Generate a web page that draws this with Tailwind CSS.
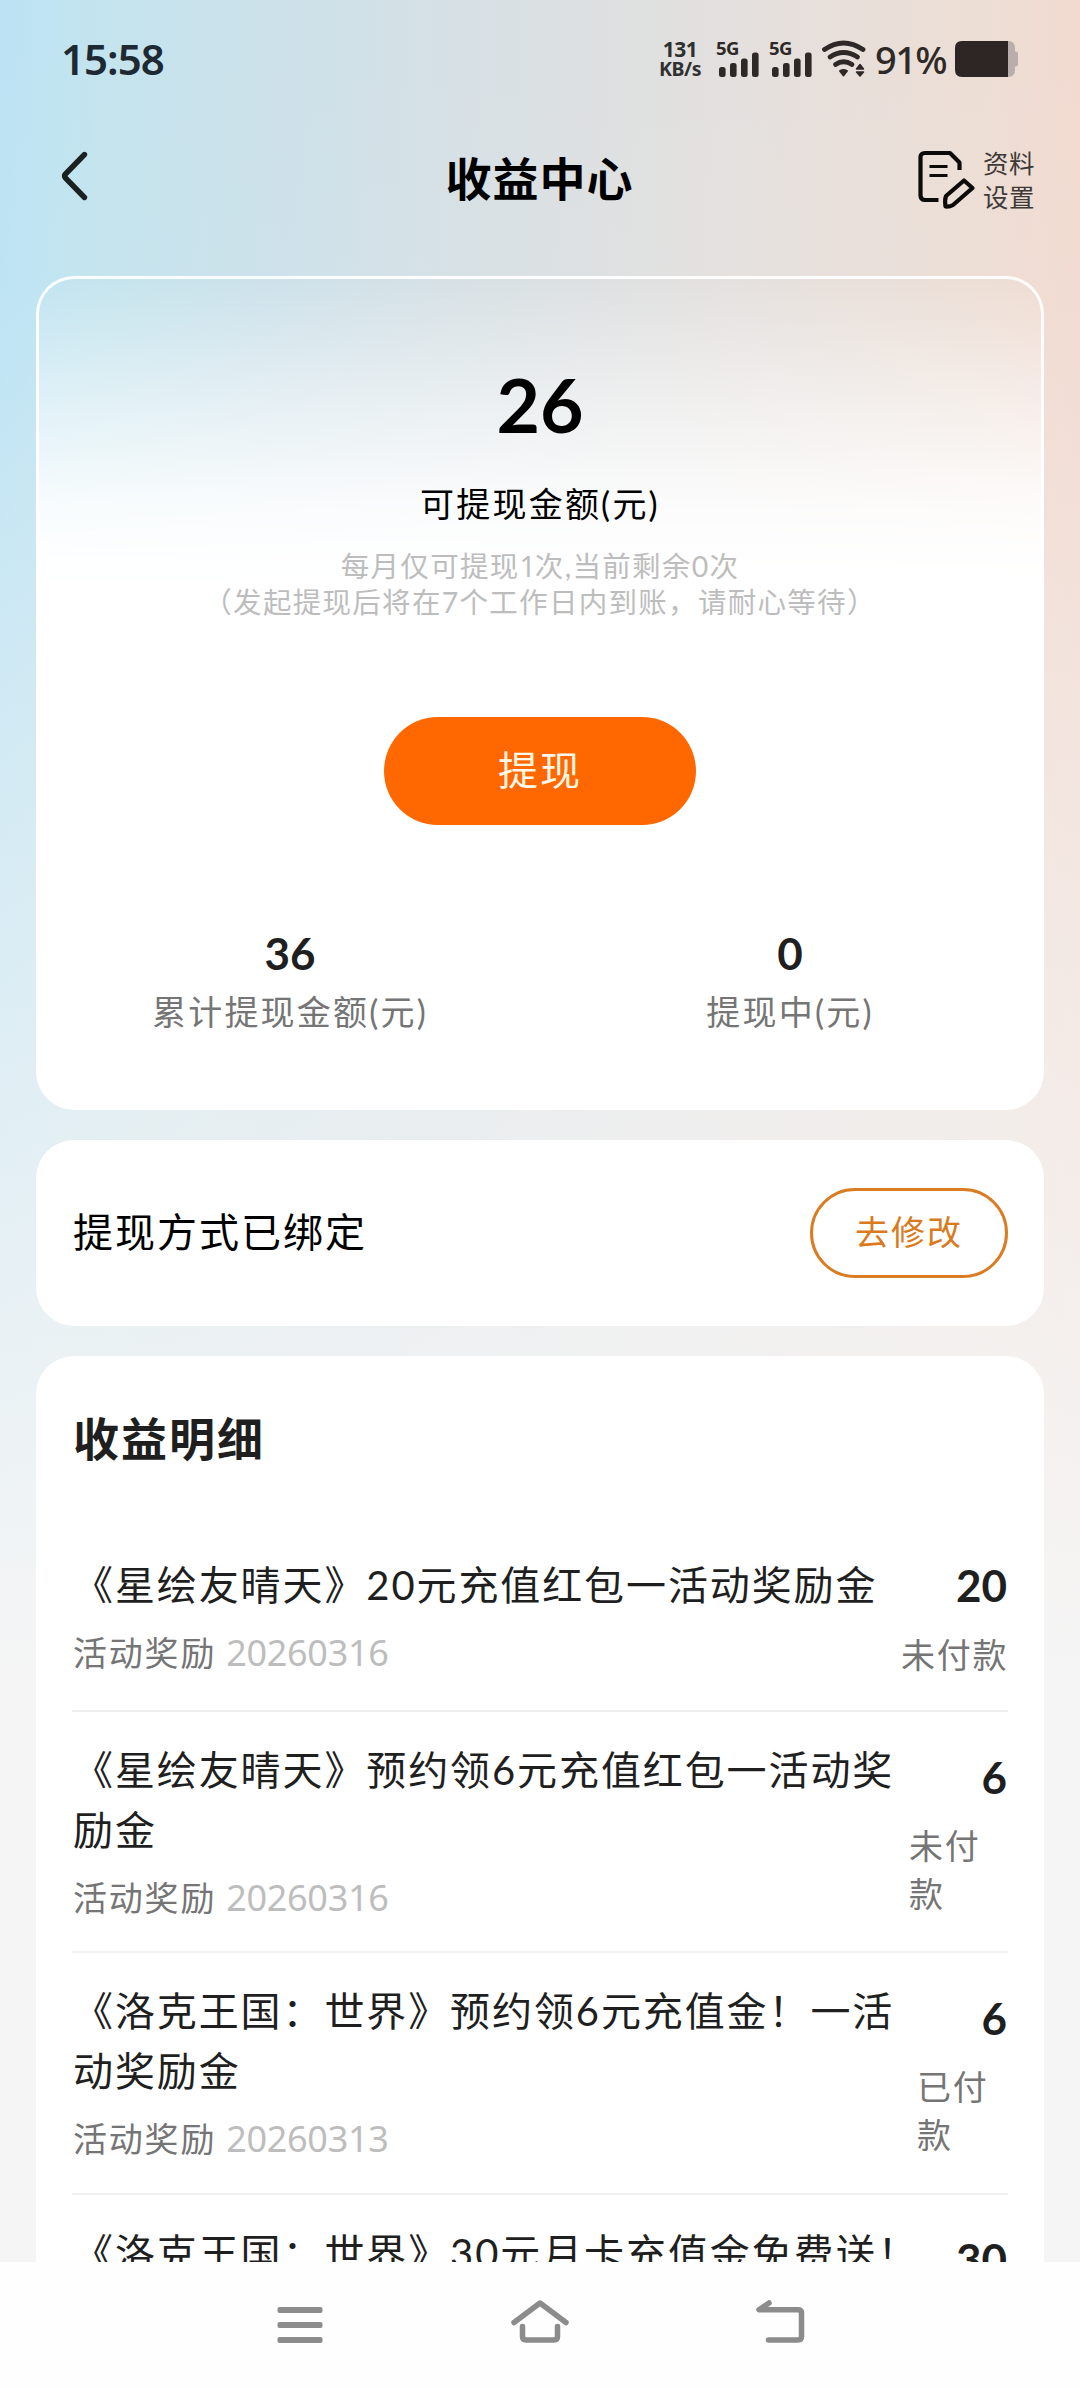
<!DOCTYPE html>
<html lang="zh-CN">
<head>
<meta charset="utf-8">
<title>收益中心</title>
<script src="https://cdn.jsdelivr.net/npm/@tailwindcss/browser@4"></script>
</head>
<body class="bg-[#f5f5f5]">
<div class="w-[1080px] h-[2388px] overflow-hidden flex flex-col font-['Lato','Noto_Sans_CJK_SC',sans-serif] text-[#1f1f1f] bg-[linear-gradient(180deg,rgba(245,245,245,0)_0px,rgba(245,245,245,0.04)_300px,rgba(245,245,245,0.35)_700px,rgba(245,245,245,0.65)_1120px,rgba(245,245,245,1)_1680px),linear-gradient(90deg,#bce3f4_0%,#c3e4ee_9%,#cce1ea_25%,#d9e0e3_48%,#e4e0de_68%,#ecded5_90%,#f2dad0_100%)]">

  <!-- status bar -->
  <div class="h-[118px] shrink-0 flex items-center pl-[61px] pr-[60px] font-['Noto_Sans',sans-serif]">
    <div class="text-[42px] leading-none font-semibold tracking-[-1px] text-[#1e2a33]">15:58</div>
    <div class="ml-auto mr-[2px] flex items-center text-[#2e2927]">
      <div class="w-[44px] flex flex-col items-center font-bold text-[#2f3130]">
        <span class="text-[21px] leading-[20px] tracking-[-0.5px]">131</span>
        <span class="text-[19.5px] leading-[20px] tracking-[-0.4px]">KB/s</span>
      </div>
      <svg class="ml-[14px] w-[44px] h-[38px] overflow-visible" viewBox="0 0 44 38" fill="currentColor">
        <text x="0" y="15" font-family="Noto Sans" font-weight="700" font-size="18.5" letter-spacing="-0.5">5G</text>
        <rect x="3" y="27" width="6.6" height="10" rx="2.5"/><rect x="14" y="23" width="6.6" height="14" rx="2.5"/><rect x="25" y="18.5" width="6.6" height="18.5" rx="2.5"/><rect x="36" y="12.5" width="6.6" height="24.5" rx="2.5"/>
      </svg>
      <svg class="ml-[9px] w-[44px] h-[38px] overflow-visible" viewBox="0 0 44 38" fill="currentColor">
        <text x="0" y="15" font-family="Noto Sans" font-weight="700" font-size="18.5" letter-spacing="-0.5">5G</text>
        <rect x="3" y="27" width="6.6" height="10" rx="2.5"/><rect x="14" y="23" width="6.6" height="14" rx="2.5"/><rect x="25" y="18.5" width="6.6" height="18.5" rx="2.5"/><rect x="36" y="12.5" width="6.6" height="24.5" rx="2.5"/>
      </svg>
      <svg class="ml-[8px] w-[46px] h-[38px]" viewBox="0 0 46 38" fill="none" stroke="currentColor" stroke-width="4.8" stroke-linecap="round">
        <path d="M3.5 9.5Q22.500 -3.5 42 9.5"/>
        <path d="M9 17Q22.500 8 36.5 17"/>
        <path d="M14.500 24.500Q22.500 19 31 24.500"/>
        <path d="M19 31Q22.500 28.800 26 31L22.500 35.500Z" fill="currentColor" stroke-width="2" stroke-linejoin="round"/>
        <path d="M39 24.500L42.500 29H35.500ZM35.500 32H42.500L39 36Z" fill="currentColor" stroke-width="1.5" stroke-linejoin="round"/>
      </svg>
      <div class="ml-[8px] w-[72px] text-[38px] leading-none font-medium tracking-[-1.6px] whitespace-nowrap">91%</div>
      <svg class="ml-[7px] w-[64px] h-[38px]" viewBox="0 0 64 38">
        <path d="M50 1h4q7 0 7 7v3.500h1q2 0 2 2v11q0 2-2 2h-1V30q0 7-7 7h-4z" fill="#b9aeac"/>
        <path d="M8 1h46v36H8q-7 0-7-7V8q0-7 7-7z" fill="#2e2624"/>
      </svg>
    </div>
  </div>

  <!-- title bar -->
  <div class="h-[122px] shrink-0 grid grid-cols-3 items-center pl-[58px] pr-[43px]">
    <svg class="w-[32px] h-[52px] -mt-[6px]" viewBox="0 0 32 52" fill="none" stroke="#1b2020" stroke-width="5.4" stroke-linecap="round" stroke-linejoin="round"><path d="M26.500 4.500L7.500 24Q5.500 26 7.500 28L26.500 47.500"/></svg>
    <h1 class="text-[46px] leading-none font-bold tracking-[1px] text-black text-center pr-[16px]">收益中心</h1>
    <div class="flex items-center justify-end">
      <svg class="w-[60px] h-[60px]" viewBox="0 0 60 60" fill="none" stroke="#0d0b0a" stroke-width="4.2" stroke-linejoin="round">
        <path d="M43.500 21V13.500L34 4H9Q4.500 4 4.500 8.500V46.500Q4.500 51 9 51H22.500"/>
        <path d="M13.500 17.500H31.500M13.500 26.500H31.500" stroke-width="3"/>
        <path d="M30 47L48 31.500L56.500 39L37 56Q34 57.800 29.500 57.500Q28.500 51 30 47Z"/>
      </svg>
      <div class="ml-[7px] mt-[1px] w-[54px] text-[25.5px] leading-[34px] tracking-[0.5px] text-[#3d3a38]">资料<br>设置</div>
    </div>
  </div>

  <!-- balance -->
  <section class="mt-[36px] mx-[36px] h-[834px] shrink-0 rounded-[38px] border-3 border-white/90 bg-[linear-gradient(180deg,rgba(255,255,255,0)_0px,rgba(255,255,255,0.22)_65px,rgba(255,255,255,0.45)_125px,rgba(255,255,255,0.62)_170px,rgba(255,255,255,0.85)_228px,rgba(255,255,255,0.97)_285px,rgba(255,255,255,1)_330px)] bg-origin-border flex flex-col items-center">
    <div class="mt-[85px] h-[80px] leading-[80px] text-[75px] font-bold text-black">26</div>
    <div class="mt-[36px] h-[48px] leading-[48px] text-[34px] tracking-[2.2px] text-black">可提现金额(元)</div>
    <div class="mt-[20px] text-[28.5px] leading-[36px] tracking-[1.3px] text-[#bdbdbd] text-center whitespace-nowrap">每月仅可提现<span class="font-['Noto_Sans',sans-serif] tracking-[-1px]">1</span>次,当前剩余0次<br>（发起提现后将在7个工作日内到账，请耐心等待）</div>
    <button class="mt-[97px] w-[312px] h-[108px] rounded-full bg-[#ff6700] text-[#fff6e6] text-[40px] tracking-[2px] pb-[2px]">提现</button>
    <div class="mt-[98px] w-[1000px] grid grid-cols-2 text-center">
      <div>
        <div class="h-[60px] leading-[60px] text-[44px] font-bold">36</div>
        <div class="h-[56px] leading-[58px] text-[34px] tracking-[2.2px] text-[#757575]">累计提现金额(元)</div>
      </div>
      <div>
        <div class="h-[60px] leading-[60px] text-[44px] font-bold">0</div>
        <div class="h-[56px] leading-[58px] text-[34px] tracking-[2.2px] text-[#757575]">提现中(元)</div>
      </div>
    </div>
  </section>

  <!-- payout method -->
  <section class="mt-[30px] mx-[36px] h-[186px] shrink-0 rounded-[38px] bg-white flex items-center justify-between px-[36px]">
    <div class="pl-[1px] text-[40px] tracking-[2px] text-black -mt-[3px]">提现方式已绑定</div>
    <button class="w-[198px] h-[90px] rounded-full border-3 border-[#da7d22] text-[#da7a1c] text-[34px] tracking-[2px] pb-[3px]">去修改</button>
  </section>

  <!-- earnings list -->
  <section class="mt-[30px] mx-[36px] h-[906px] shrink-0 rounded-t-[38px] bg-white px-[36px] overflow-hidden">
    <h2 class="mt-[53px] h-[60px] leading-[60px] pl-[1px] text-[46px] font-bold tracking-[2px]">收益明细</h2>

    <div class="mt-[57px] h-[186px] flex justify-between border-b-2 border-[#efefef]">
      <div class="pt-[29px] pl-[1px] whitespace-nowrap">
        <div class="text-[40px] leading-[60px] tracking-[1.9px]">《星绘友晴天》20元充值红包一活动奖励金</div>
        <div class="mt-[14px] h-[48px] leading-[48px] text-[34px] tracking-[1.8px] text-[#757575]">活动奖励<span class="ml-[10px] text-[36px] tracking-[-0.3px] text-[#bdbdbd] font-['Noto_Sans',sans-serif]">20260316</span></div>
      </div>
      <div class="pt-[29px] w-[107px]">
        <div class="h-[60px] leading-[60px] text-[44px] font-bold text-right pr-[1px]">20</div>
        <div class="mt-[16px] text-[34px] leading-[48px] tracking-[1.8px] text-[#757575] whitespace-nowrap">未付款</div>
      </div>
    </div>

    <div class="h-[241px] flex justify-between border-b-2 border-[#f3f3f3]">
      <div class="pt-[28px] pl-[1px] whitespace-nowrap">
        <div class="text-[40px] leading-[60px] tracking-[1.9px]">《星绘友晴天》预约领6元充值红包一活动奖<br>励金</div>
        <div class="mt-[14px] h-[48px] leading-[48px] text-[34px] tracking-[1.8px] text-[#757575]">活动奖励<span class="ml-[10px] text-[36px] tracking-[-0.3px] text-[#bdbdbd] font-['Noto_Sans',sans-serif]">20260316</span></div>
      </div>
      <div class="pt-[35px] w-[99px]">
        <div class="h-[60px] leading-[60px] text-[44px] font-bold text-right pr-[1px]">6</div>
        <div class="mt-[15px] text-[34px] leading-[48px] tracking-[1.8px] text-[#757575]">未付<br>款</div>
      </div>
    </div>

    <div class="h-[242px] flex justify-between border-b-2 border-[#efefef]">
      <div class="pt-[28px] pl-[1px] whitespace-nowrap">
        <div class="text-[40px] leading-[60px] tracking-[1.9px]">《洛克王国：世界》预约领6元充值金！一活<br>动奖励金</div>
        <div class="mt-[14px] h-[48px] leading-[48px] text-[34px] tracking-[1.8px] text-[#757575]">活动奖励<span class="ml-[10px] text-[36px] tracking-[-0.3px] text-[#bdbdbd] font-['Noto_Sans',sans-serif]">20260313</span></div>
      </div>
      <div class="pt-[35px] w-[91px]">
        <div class="h-[60px] leading-[60px] text-[44px] font-bold text-right pr-[1px]">6</div>
        <div class="mt-[15px] text-[34px] leading-[48px] tracking-[1.8px] text-[#757575]">已付<br>款</div>
      </div>
    </div>

    <div class="h-[241px] flex justify-between">
      <div class="pt-[28px] pl-[1px] text-[40px] leading-[60px] tracking-[1.9px] whitespace-nowrap">《洛克王国：世界》30元月卡充值金免费送！</div>
      <div class="pt-[34px] pr-[1px] text-[44px] leading-[60px] font-bold">30</div>
    </div>
  </section>

  <!-- system navigation -->
  <nav class="h-[126px] shrink-0 bg-[#fefefe] flex items-start justify-center gap-[180px] pt-[35px]">
    <svg class="w-[60px] h-[50px]" viewBox="0 0 60 50" fill="#8c8c8c"><rect x="7.5" y="10" width="45" height="6" rx="2"/><rect x="7.5" y="25" width="45" height="6" rx="2"/><rect x="7.5" y="40" width="45" height="6" rx="2"/></svg>
    <svg class="w-[60px] h-[50px]" viewBox="0 0 60 50" fill="none" stroke="#8c8c8c" stroke-width="5.5" stroke-linecap="round" stroke-linejoin="round"><path d="M4 25.500L30 6L56 25.500"/><path d="M12.500 29.500V39.500Q12.500 43 16 43H44Q47.500 43 47.500 39.500V29.500"/></svg>
    <svg class="w-[60px] h-[50px]" viewBox="0 0 60 50" fill="none" stroke="#8c8c8c" stroke-width="5.5" stroke-linecap="round" stroke-linejoin="round"><path d="M19 6L9 12.800H48Q51.500 12.800 51.500 16V39.500Q51.500 43 48 43H18.500"/></svg>
  </nav>
</div>
</body>
</html>
